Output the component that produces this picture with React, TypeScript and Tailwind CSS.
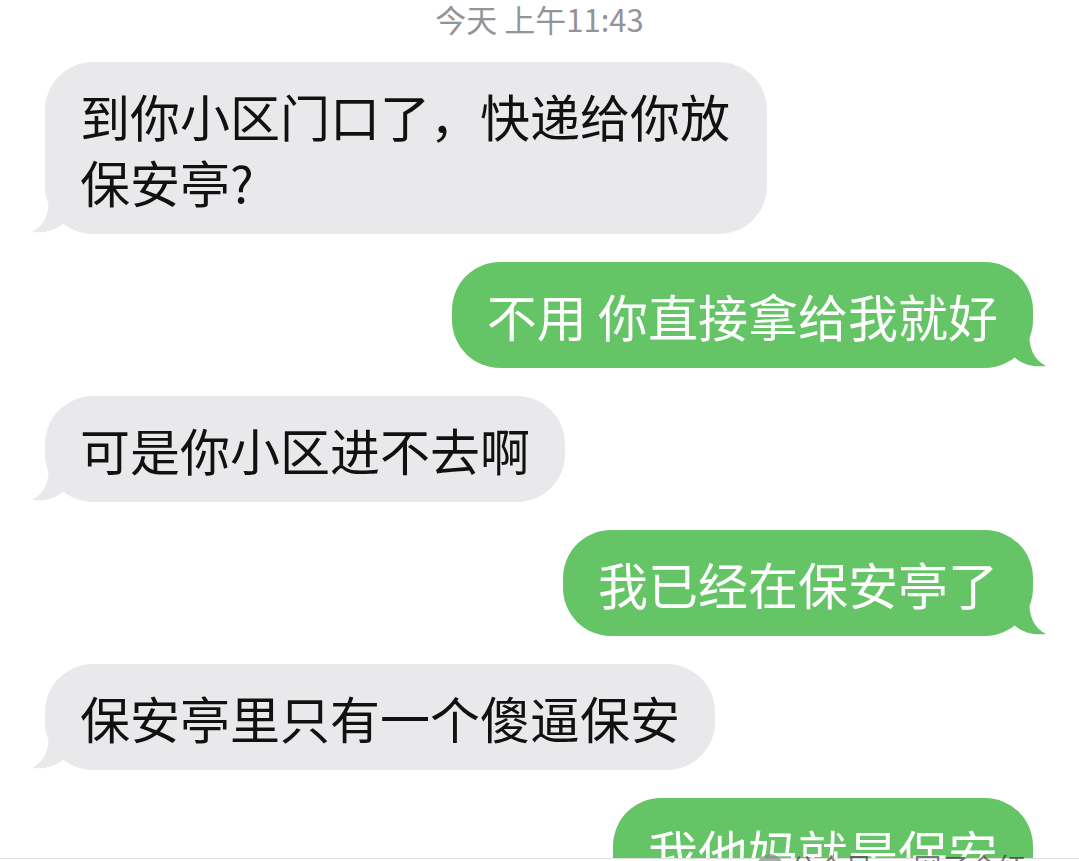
import React from "react";

type Side = "in" | "out";

interface Message {
	id: number;
	side: Side;
	text: string;
}

const messages: Message[] = [
	{ id: 1, side: "in", text: "到你小区门口了，快递给你放保安亭?" },
	{ id: 2, side: "out", text: "不用 你直接拿给我就好" },
	{ id: 3, side: "in", text: "可是你小区进不去啊" },
	{ id: 4, side: "out", text: "我已经在保安亭了" },
	{ id: 5, side: "in", text: "保安亭里只有一个傻逼保安" },
	{ id: 6, side: "out", text: "我他妈就是保安" },
];

// little curl at the bottom corner of each bubble
function Tail({ side }: { side: Side }) {
	const fill = side === "in" ? "#e9e9eb" : "#64c466";
	return (
		<svg
			width="40"
			height="40"
			viewBox="0 0 40 40"
			className={
				side === "in"
					? "absolute -left-[14px] bottom-0"
					: "absolute -right-[14px] bottom-0 -scale-x-100"
			}
		>
			<path
				d="M18 2 C18 20 14 31 1 38 C14 39.5 25 36 33 29 L40 0 Z"
				fill={fill}
			/>
		</svg>
	);
}

function Bubble({ msg }: { msg: Message }) {
	const incoming = msg.side === "in";
	return (
		<div
			className={
				incoming
					? "relative self-start ml-[45px] max-w-[722px] rounded-[48px] bg-[#e9e9eb] px-[35px] py-[20px] text-[50px] leading-[66px] text-[#111111]"
					: "relative self-end mr-[46px] max-w-[722px] rounded-[48px] bg-[#64c466] px-[35px] py-[20px] text-[50px] leading-[66px] text-white"
			}
		>
			<Tail side={msg.side} />
			<span className="relative">{msg.text}</span>
		</div>
	);
}

export default function App() {
	return (
		<div
			className="relative h-[861px] w-[1079px] overflow-hidden bg-white"
			style={{ fontFamily: '"Noto Sans CJK SC", "Noto Sans", sans-serif' }}
		>
			{/* timestamp */}
			<div className="pt-[1px] text-center text-[31px] leading-[36px] text-[#949498]">
				今天 上午11:43
			</div>

			<div className="mt-[25px] flex flex-col gap-[28px]">
				{messages.map((m) => (
					<Bubble key={m.id} msg={m} />
				))}
			</div>

			{/* bottom edge of the screenshot + watermark */}
			<div className="absolute left-0 right-0 top-[858px] h-[3px] border-t border-[#dedede] bg-white" />
			<div className="absolute left-[757px] top-[851px] flex items-center gap-[6px] text-[28px] leading-[32px] text-[#3a3a3a]/70">
				<div className="h-[26px] w-[26px] rounded-full bg-[#7f8f80]/70" />
				<span>公众号 · 网子金红</span>
			</div>
		</div>
	);
}
